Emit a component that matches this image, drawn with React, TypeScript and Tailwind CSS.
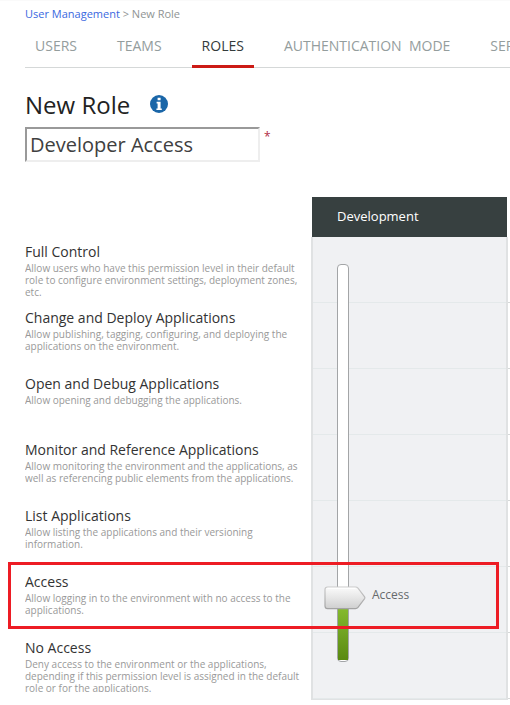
import { useState } from 'react';

const tabs = ['USERS', 'TEAMS', 'ROLES', 'AUTHENTICATION\u00a0 MODE', 'SERVICE ACCOUNTS'];

const levels = [
  {
    name: 'Full Control',
    text: 'Allow users who have this permission level in their default role to configure environment settings, deployment zones, etc.',
  },
  {
    name: 'Change and Deploy Applications',
    text: 'Allow publishing, tagging, configuring, and deploying the applications on the environment.',
  },
  { name: 'Open and Debug Applications', text: 'Allow opening and debugging the applications.' },
  {
    name: 'Monitor and Reference Applications',
    text: 'Allow monitoring the environment and the applications, as well as referencing public elements from the applications.',
  },
  { name: 'List Applications', text: 'Allow listing the applications and their versioning information.' },
  { name: 'Access', text: 'Allow logging in to the environment with no access to the applications.' },
  {
    name: 'No Access',
    text: 'Deny access to the environment or the applications, depending if this permission level is assigned in the default role or for the applications.',
  },
];

const ROW_HEIGHT = 66;

function PermissionSlider() {
  const [level, setLevel] = useState(1);
  const bottom = (level - 1) * ROW_HEIGHT;

  return (
    <div className="absolute left-6 top-[27px] h-[398px] w-3 rounded-[4px] border border-[#a3a5a7] bg-white">
      <div
        className="absolute inset-x-0 bottom-px bg-linear-to-b from-[#8cc232] to-[#5a8a12]"
        style={{ height: Math.max(0, bottom + 60) }}
      />
      <div className="absolute -left-3.5 flex h-6 items-center" style={{ bottom: bottom + 51 }}>
        <svg width="42" height="24" viewBox="0 0 42 24" aria-hidden="true">
          <defs>
            <linearGradient id="thumb" x1="0" y1="0" x2="0" y2="1">
              <stop offset="0" stopColor="#fbfbfb" />
              <stop offset="0.5" stopColor="#e6e6e6" />
              <stop offset="1" stopColor="#cfcfcf" />
            </linearGradient>
            <linearGradient id="thumbEdge" x1="0" y1="0" x2="0" y2="1">
              <stop offset="0" stopColor="#c9c9c9" />
              <stop offset="1" stopColor="#a3a3a3" />
            </linearGradient>
          </defs>
          <path
            d="M3.5 1 H31.5 Q33 1 34 2.2 L40.6 10.8 Q41.2 11.7 40.6 12.6 L34 21.4 Q33 22.6 31.5 22.6 H3.5 Q1 22.6 1 20.1 V3.5 Q1 1 3.5 1 Z"
            fill="url(#thumb)"
            stroke="url(#thumbEdge)"
            strokeWidth="1.2"
          />
          <path d="M3.5 2.3 H31.5" stroke="#ffffff" strokeWidth="1" />
        </svg>
        <span className="ml-1.5 pb-1.5 whitespace-nowrap text-[12px] leading-4 text-[#666a6c]">
          {levels[6 - level].name}
        </span>
      </div>
      <input
        type="range"
        min={0}
        max={6}
        value={level}
        onChange={(e) => setLevel(Number(e.target.value))}
        aria-labelledby="development"
        className="absolute -left-3.5 top-0 h-full w-10 cursor-pointer opacity-0 [direction:rtl] [writing-mode:vertical-lr]"
      />
    </div>
  );
}

export default function App() {
  return (
    <main className="overflow-hidden border-t border-[#fafafa] bg-white pb-1.5 font-['Open_Sans','Noto_Sans',sans-serif] text-[#333333]">
      <nav aria-label="Breadcrumb" className="mt-1 ml-[25px] text-[11px] leading-[18px] text-[#8f9494]">
        <a href="#users" className="text-[#3a68e0]">
          User Management
        </a>{' '}
        &gt; New Role
      </nav>

      <nav aria-label="Sections" className="ml-[25px] flex h-[45px] gap-5 border-b border-[#d5d8d8] whitespace-nowrap">
        {tabs.map((tab) => (
          <a
            key={tab}
            href="#tab"
            aria-current={tab === 'ROLES' ? 'page' : undefined}
            className={
              tab === 'ROLES'
                ? 'h-[45px] shrink-0 border-b-3 border-[#cc1b16] px-2.5 pt-[13px] text-[14px] leading-5 text-[#333b3b]'
                : 'shrink-0 px-2.5 pt-[13px] text-[14px] leading-5 text-[#949d9d]'
            }
          >
            {tab}
          </a>
        ))}
      </nav>

      <div className="mt-[21px] ml-[25px] flex h-8 items-start gap-5">
        <h1 className="text-[24px] leading-8 text-[#222222]">
          <label htmlFor="role-name">New Role</label>
        </h1>
        <button type="button" aria-label="Help" className="mt-1.5 size-[18px]">
          <svg viewBox="0 0 18 18" aria-hidden="true">
            <circle cx="9" cy="9" r="9" fill="#1a66a8" />
            <path d="M7.6 2.8 H10.6 V5.2 H7.6 Z M6.6 6.8 H10.6 V13.4 H11.8 V15 H6.4 V13.4 H7.6 V8.4 H6.6 Z" fill="#ffffff" />
          </svg>
        </button>
      </div>

      <div className="mt-1.5 ml-[25px] flex items-start gap-1">
        <input
          id="role-name"
          defaultValue="Developer Access"
          className="h-[35px] w-[235px] border-2 border-t-[#999999] border-r-[#eeeeee] border-b-[#eeeeee] border-l-[#999999] px-[3px] text-[20px] text-[#404040] outline-none"
        />
        <span className="text-[12px] leading-5 text-[#b02a45]">*</span>
      </div>

      <section className="relative mt-[35px] grid grid-cols-[minmax(0,1fr)_197px_2px]">
        <ul className="pt-10 pl-[25px]">
          {levels.map((level) => (
            <li key={level.name} className="h-[66px]">
              <div className="h-[59px] pt-[5px] last:overflow-hidden">
                <h2 className="text-[14px] leading-5">{level.name}</h2>
                <p className="text-[10px] leading-3 text-[#999999]">{level.text}</p>
              </div>
            </li>
          ))}
        </ul>

        <div>
          <h2
            id="development"
            className="mx-px h-10 bg-[#374040] pl-[25px] text-[13px] leading-[38px] text-white"
          >
            Development
          </h2>
          <div className="relative border-x-2 border-b border-[#e0e2e3] bg-[#f0f1f3]">
            {levels.map((level) => (
              <div key={level.name} className="h-[66px] border-b border-[#e4e9ea]" />
            ))}
            <PermissionSlider />
          </div>
        </div>

        <div className="pt-10">
          {levels.map((level) => (
            <div key={level.name} className="h-[66px] border-b border-[#d5d8d8]" />
          ))}
        </div>

        <div className="pointer-events-none absolute top-[365px] right-[11px] left-2 h-[67px] border-3 border-[#ed1c24]" />
      </section>
    </main>
  );
}
